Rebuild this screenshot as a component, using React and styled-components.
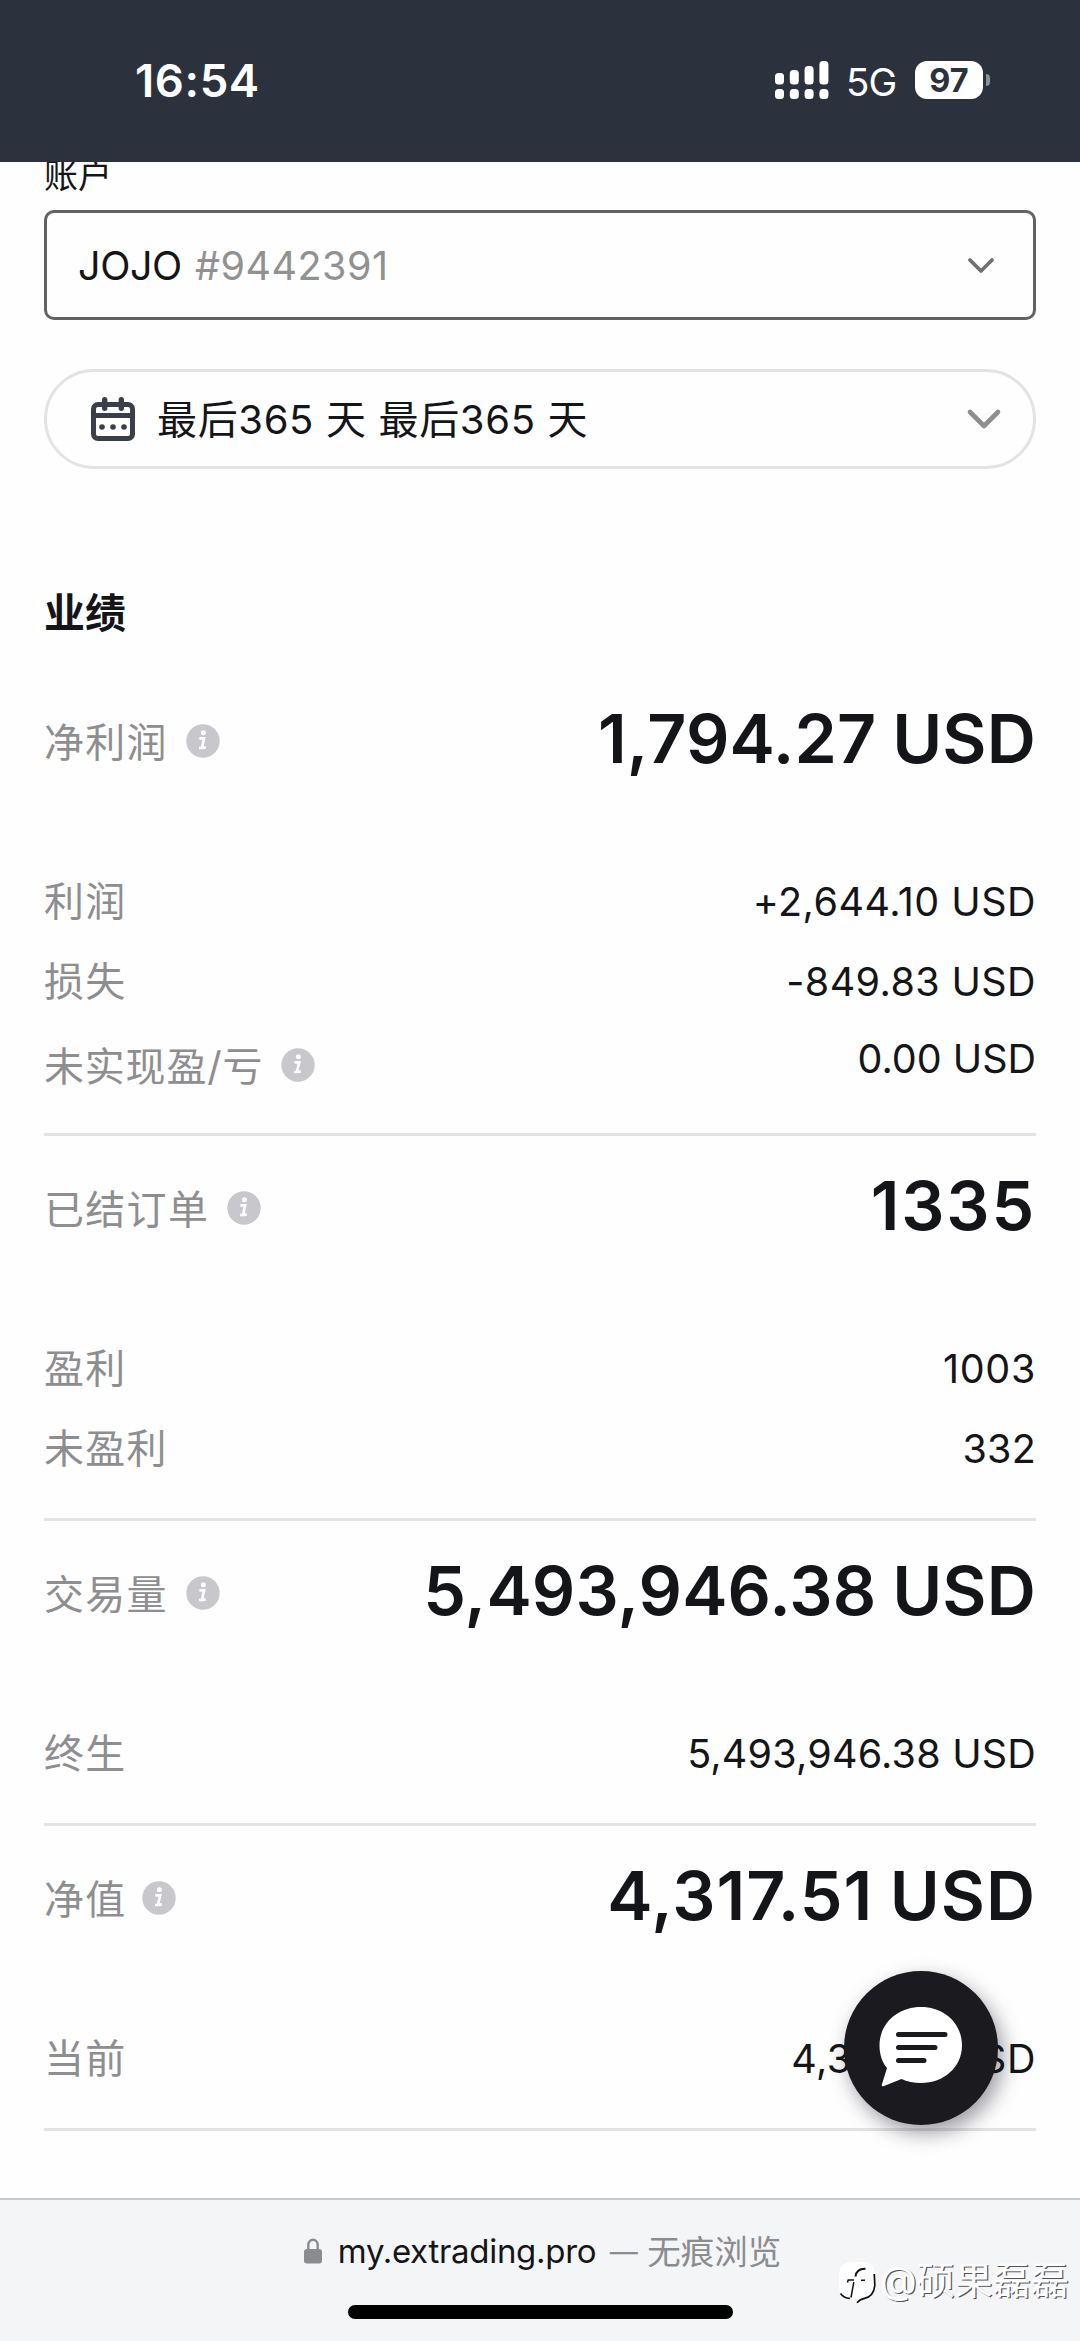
import React from 'react';
import styled, { createGlobalStyle } from 'styled-components';

const GlobalStyle = createGlobalStyle`
  * { box-sizing: border-box; }
  body {
    margin: 0;
    background: #fefefe;
    font-family: Inter, "Noto Sans CJK SC", sans-serif;
    color: #141519;
  }
  svg { overflow: visible; }
`;

const Screen = styled.div`
  position: relative;
  width: 1080px;
  height: 2341px;
  overflow: hidden;
  display: flex;
  flex-direction: column;
  background: #fefefe;
`;

const StatusBar = styled.header`
  flex: none;
  height: 162px;
  padding: 0 90px 0 135px;
  display: flex;
  align-items: center;
  justify-content: space-between;
  background: #2c323d;
  color: #fff;
`;

const Clock = styled.time`
  font-size: 45.5px;
  line-height: 60px;
  font-weight: 600;
  letter-spacing: 0.6px;
`;

const StatusIcons = styled.div`
  display: flex;
  align-items: center;
  height: 60px;
  margin-top: -2px;
`;

const Network = styled.span`
  margin-left: 17px;
  width: 51px;
  font-size: 38.5px;
  line-height: 50px;
  padding-top: 3px;
  letter-spacing: -0.8px;
`;

const Battery = styled.span`
  margin-left: 18px;
  width: 68px;
  height: 38px;
  border-radius: 12px;
  display: flex;
  align-items: center;
  justify-content: center;
  background: #fff;
  color: #2c323d;
  font-size: 32.5px;
  font-weight: 700;
`;

const BatteryTip = styled.span`
  margin-left: 3px;
  width: 4px;
  height: 12px;
  border-radius: 0 4px 4px 0;
  background: #8c9097;
`;

const Content = styled.main`
  flex: 1;
  min-height: 0;
  padding: 0 44px;
  overflow: hidden;
`;

const FieldLabel = styled.label`
  display: block;
  height: 48px;
  margin-top: -9px;
  margin-bottom: 9px;
  font-size: 34px;
  line-height: 46px;
`;

const AccountSelect = styled.div`
  height: 110px;
  padding: 1px 39px 0 31px;
  display: flex;
  align-items: center;
  justify-content: space-between;
  border: 3px solid #626263;
  border-radius: 10px;
  font-size: 39.5px;
  letter-spacing: -0.4px;
`;

const AccountNumber = styled.span`
  margin-left: 13px;
  color: #919192;
  letter-spacing: 0.5px;
`;

const PeriodSelect = styled.div`
  height: 100px;
  margin-top: 49px;
  padding: 0 33px 0 44px;
  display: flex;
  align-items: center;
  border: 3px solid #e3e3e4;
  border-radius: 50px;
  font-size: 40px;
`;

const PeriodText = styled.span`
  flex: 1;
  margin-left: 22px;
  padding-bottom: 4px;
  letter-spacing: 0.65px;
  white-space: pre;
`;

const Heading = styled.h2`
  margin: 114px 0 0;
  height: 60px;
  font-size: 41px;
  line-height: 60px;
  font-weight: 700;
`;

const Group = styled.section`
  padding: ${(p) => (p.$first ? '61px 0 31px' : '35px 0 29px')};
  border-bottom: 3px solid #e3e3e4;
`;

const GroupHead = styled.div`
  height: 70px;
  margin-bottom: 88px;
  display: flex;
  align-items: center;
  justify-content: space-between;
`;

const Row = styled.div`
  height: 80px;
  display: flex;
  align-items: center;
  justify-content: space-between;
`;

const Label = styled.span`
  display: flex;
  align-items: center;
  padding-top: ${(p) => p.$drop || 0}px;
  color: #8e8e90;
  font-size: 40px;
  line-height: 60px;
  letter-spacing: ${(p) => p.$track ?? 1.3}px;
`;

const Value = styled.span`
  font-size: 39.5px;
  line-height: 60px;
  padding-bottom: ${(p) => p.$lift || 0}px;
  letter-spacing: ${(p) => p.$track || 0}px;
`;

const Total = styled.strong`
  padding-bottom: 3px;
  font-size: 68px;
  line-height: 70px;
  font-weight: 600;
  word-spacing: -1.5px;
  letter-spacing: ${(p) => p.$track || 0}px;
`;

const InfoBadge = styled.svg`
  flex: none;
  width: 34px;
  height: 34px;
  margin: -4px 0 0 ${(p) => p.$gap || 18}px;
`;

const ChatButton = styled.button`
  position: absolute;
  left: 844px;
  top: 1971px;
  width: 154px;
  height: 154px;
  padding: 0;
  border: 0;
  border-radius: 50%;
  background: #1b1b1f;
  box-shadow: 5px 8px 20px rgba(20, 18, 35, 0.42);
`;

const BrowserBar = styled.footer`
  flex: none;
  height: 143px;
  border-top: 2px solid #c9c9cb;
  background: #f4f5f7;
  display: flex;
  flex-direction: column;
  align-items: center;
`;

const Address = styled.div`
  height: 60px;
  margin-top: 21px;
  padding-left: 5px;
  display: flex;
  align-items: center;
  color: #8b8c8f;
  font-size: 33.5px;
  white-space: pre;
`;

const Host = styled.span`
  margin-left: 16px;
  color: #141519;
  font-size: 33px;
  letter-spacing: -0.3px;
`;

const Dash = styled.span`
  width: 27px;
  height: 2px;
  margin: 2px 10px 0 14px;
  display: flex;
  align-items: center;
  justify-content: center;
  font-size: 28px;
`;

const BrowsingMode = styled.span`
  padding-bottom: 3px;
`;

const HomeIndicator = styled.div`
  width: 385px;
  height: 14px;
  margin-top: 24px;
  border-radius: 7px;
  background: #000;
`;

const Watermark = styled.div`
  position: absolute;
  left: 837px;
  top: 2258px;
  display: flex;
  align-items: center;
  gap: 3px;
  color: #fff;
  font-size: 38px;
  line-height: 50px;
`;

const WatermarkName = styled.span`
  margin-top: -3px;
  text-shadow: 1.3px 1.3px 0.4px #555;
`;

const Info = ({ gap }) => (
  <InfoBadge $gap={gap} viewBox="0 0 34 34">
    <circle cx="17" cy="17" r="16.7" fill="#c7c7cc" />
    <circle cx="17.4" cy="8.8" r="2.5" fill="#fff" />
    <path d="M13.4 14.4h4.8l-2 8.2q-.3 1.2 1 1h2.6M13 24h5" fill="none" stroke="#fff" strokeWidth="2.6" />
  </InfoBadge>
);

const Signal = () => (
  <svg width="54" height="38" viewBox="0 0 54 38" fill="#fff">
    {[12, 9, 5, 0].map((y, i) => (
      <g key={y}>
        <rect x={i * 14.8} y={y} width="9" height={23.5 - y} rx="3.5" />
        <rect x={i * 14.8} y="28" width="9" height="10" rx="3.5" />
      </g>
    ))}
  </svg>
);

const Chevron = ({ width, height, color, stroke }) => (
  <svg width={width} height={height} viewBox={`0 0 ${width} ${height}`} fill="none" stroke={color} strokeWidth={stroke} strokeLinecap="round" strokeLinejoin="round">
    <path d={`M2 2L${width / 2} ${height - 3}L${width - 2} 2`} />
  </svg>
);

const Calendar = () => (
  <svg width="44" height="44" viewBox="0 0 44 44" fill="none" stroke="#3b3f4a">
    <rect x="2.5" y="7.5" width="39" height="34" rx="4.5" strokeWidth="5" />
    <path d="M2.5 18.5h39" strokeWidth="5" />
    <path d="M13.7 2.8v8.4M30.3 2.8v8.4" strokeWidth="5.4" strokeLinecap="round" />
    <g fill="#3b3f4a" stroke="none">
      <circle cx="11" cy="30" r="2.8" />
      <circle cx="22" cy="30" r="2.8" />
      <circle cx="33" cy="30" r="2.8" />
    </g>
  </svg>
);

const ChatIcon = () => (
  <svg width="154" height="154" viewBox="0 0 154 154" display="block">
    <path d="M77 36C100 36 118 52 118 74.500C118 96 100 112 77 112C70 112 63 110.500 57.500 108L40 115Q37 116 38 113L43 97C38 91 35.500 83 35.500 74.500C35.500 52 54 36 77 36Z" fill="#fff" />
    <path d="M54.500 63.500H101M54.500 76.500H91M54.500 89.500H80" stroke="#1b1b1f" strokeWidth="5" strokeLinecap="round" />
  </svg>
);

const Lock = () => (
  <svg width="18" height="26" viewBox="0 0 18 26">
    <path d="M4.300 12V7a4.700 5.300 0 0 1 9.400 0v5" fill="none" stroke="#8b8c8f" strokeWidth="2.400" />
    <rect x="0" y="11" width="18" height="14.500" rx="3" fill="#8b8c8f" />
  </svg>
);

const WatermarkLogo = () => (
  <svg width="40" height="46" viewBox="0 0 40 46">
    <path d="M13 3H27Q38 4 38 15V27Q37 39 28 40L20 44V40H13Q2 38 2 27V15Q3 4 13 3Z" fill="#fff" />
    <g fill="none" stroke="#111">
      <path d="M28.500 9.800Q19.500 9.500 18.500 17.500" strokeWidth="2" />
      <path d="M16.800 23L14 38.500M10.500 23.500L11.200 21H17M24 21.300H28" strokeWidth="1.500" />
      <path d="M37.300 15L37.800 26Q37 37.500 27.500 39.300Q22.500 40.500 20 43.800" strokeWidth="1.700" />
      <path d="M3.500 34.500Q6.500 39 13 39.500" strokeWidth="1.500" />
    </g>
  </svg>
);

const GROUPS = [
  {
    label: '净利润', total: '1,794.27 USD', totalTrack: 0.15,
    rows: [
      { label: '利润', value: '+2,644.10 USD', track: 0.5 },
      { label: '损失', value: '-849.83 USD', track: 0.4 },
      { label: '未实现盈/亏', value: '0.00 USD', info: true },
    ],
  },
  {
    label: '已结订单', total: '1335', totalTrack: 1.8,
    rows: [
      { label: '盈利', value: '1003', track: 0.7 },
      { label: '未盈利', value: '332', track: 0.2 },
    ],
  },
  {
    label: '交易量', total: '5,493,946.38 USD', totalTrack: 0.15,
    rows: [{ label: '终生', value: '5,493,946.38 USD', track: 0.2 }],
  },
  {
    label: '净值', total: '4,317.51 USD', totalTrack: 0.95, infoGap: 15,
    rows: [{ label: '当前', value: '4,317.51 USD', track: 0.6 }],
  },
];

export default function App() {
  return (
    <Screen>
      <GlobalStyle />
      <StatusBar>
        <Clock>16:54</Clock>
        <StatusIcons>
          <Signal />
          <Network>5G</Network>
          <Battery>97</Battery>
          <BatteryTip />
        </StatusIcons>
      </StatusBar>
      <Content>
        <FieldLabel>账户</FieldLabel>
        <AccountSelect>
          <span>JOJO<AccountNumber>#9442391</AccountNumber></span>
          <Chevron width={26} height={16} color="#707072" stroke={3.8} />
        </AccountSelect>
        <PeriodSelect>
          <Calendar />
          <PeriodText>最后365 天 最后365 天</PeriodText>
          <Chevron width={32} height={19} color="#8e8e90" stroke={4.6} />
        </PeriodSelect>
        <Heading>业绩</Heading>
        {GROUPS.map((g, i) => (
          <Group key={g.label} $first={i === 0}>
            <GroupHead>
              <Label $drop={8}>{g.label}<Info gap={g.infoGap} /></Label>
              <Total $track={g.totalTrack}>{g.total}</Total>
            </GroupHead>
            {g.rows.map((r) => (
              <Row key={r.label}>
                <Label $drop={r.info ? 10 : 0} $track={r.info ? 0.8 : 1.3}>{r.label}{r.info && <Info />}</Label>
                <Value $lift={r.info ? 6 : 0} $track={r.track}>{r.value}</Value>
              </Row>
            ))}
          </Group>
        ))}
      </Content>
      <BrowserBar>
        <Address>
          <Lock />
          <Host>my.extrading.pro</Host>
          <Dash>—</Dash>
          <BrowsingMode>无痕浏览</BrowsingMode>
        </Address>
        <HomeIndicator />
      </BrowserBar>
      <ChatButton aria-label="chat"><ChatIcon /></ChatButton>
      <Watermark><WatermarkLogo /><WatermarkName>@硕果磊磊</WatermarkName></Watermark>
    </Screen>
  );
}
